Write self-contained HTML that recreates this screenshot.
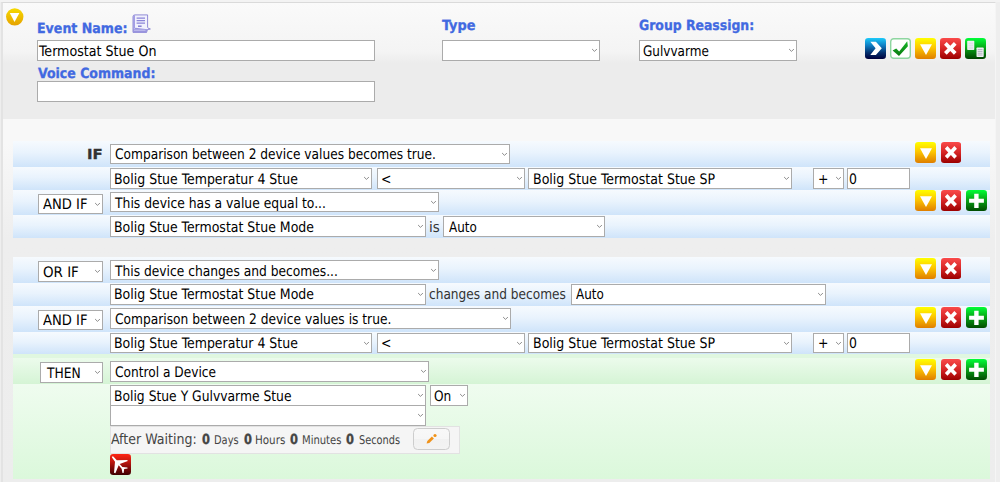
<!DOCTYPE html>
<html><head><meta charset="utf-8"><title>Event</title>
<style>
html,body{margin:0;padding:0}
body{width:1000px;height:482px;overflow:hidden;background:#eeeeee;position:relative;font-family:"DejaVu Sans Condensed","DejaVu Sans","Liberation Sans",sans-serif;font-size:14.5px;color:#000;text-rendering:geometricPrecision}
div{position:absolute;box-sizing:border-box}
.frame{border:1px solid #dadada;border-left:2px solid #e3e3e3;border-right-color:#f5f5f5;background:linear-gradient(#f8f8f8 0,#f8f8f8 140px,#eeeeee 236px,#ededed 100%)}
.tops{background:#f3f3f3}
.hdr{background:linear-gradient(#fafafa 0%,#f4f4f4 42%,#ececec 52%,#ececec 100%)}
.rowb{background:linear-gradient(#f6fafe 0%,#e9f3fd 45%,#cfe4fa 100%)}
.rowg{background:linear-gradient(#ecfbec,#d5f4d5)}
.gbody{background:linear-gradient(#e0f7e0 0,#e0f7e0 4px,#effcef 30px,#dbf8db 100%)}
.sel,.inp{border:1px solid #ababab;background:#fff;white-space:nowrap;overflow:hidden}
span,.t{position:absolute;white-space:nowrap;line-height:20px;font-size:14.5px;transform-origin:0 50%;transform:scaleX(.955)}
.cv{position:absolute;right:1px;top:50%;margin-top:-2.5px}
.lbl{color:#4169e1;font-weight:bold;font-size:14px;-webkit-text-stroke:0.3px #4169e1}
.ic{width:21px;height:21px}
.ic svg{display:block}
.b{font-weight:bold;font-size:13.8px;-webkit-text-stroke:0.3px currentColor}
.sm{font-size:12px}
.dk{color:#333}.dk2{color:#444}
.wait{background:#f5f5f5;border:1px solid #e2e2e2}
.btn{border:1px solid #cdcdcd;border-radius:4.5px;background:linear-gradient(#f8f8f8 0%,#f6f6f6 50%,#f1f1f1 52%,#f3f3f3 100%)}
</style></head><body>
<div class="tops" style="left:0px;top:0px;width:1000px;height:2px"></div>
<div class="frame" style="left:1px;top:2px;width:995px;height:488px"></div>
<div class="hdr" style="left:3px;top:3px;width:992px;height:116px"></div>
<div class="ic" style="left:6px;top:7.5px;width:18px;height:18px"><svg width="18" height="18" viewBox="0 0 18 18"><defs><linearGradient id="g1" x1="0" y1="0" x2="0" y2="1"><stop offset="0" stop-color="#f6da00"/><stop offset="1" stop-color="#e6a200"/></linearGradient></defs><circle cx="8.75" cy="8.85" r="8.7" fill="url(#g1)"/><path d="M3.8 5 L13.4 5 L8.5 14.1 Z" fill="#fff"/></svg></div>
<div class="t lbl" style="left:37.03px;top:19px;transform:scaleX(1.000)">Event Name:</div>
<div class="ic" style="left:131.7px;top:14.1px;width:20px;height:20px"><svg width="20" height="20" viewBox="0 0 20 20"><path d="M3 0.9 H15.6 V13.2 Q15.9 14.7 18.4 15 L15.4 15.6 L14.6 18.4 H1 V2.6 Q1 0.9 3 0.9Z" fill="#f1f1fd" stroke="#7770cd" stroke-width="0.8" stroke-linejoin="round"/><path d="M1 2.6 Q1 0.9 3 0.9 V13.6 Q2.8 15.2 1 15.4 Z" fill="#a39eE4"/><path d="M1 15.2 Q3 15 3.4 13.8 L15.4 15.3 L14.6 18.4 H1Z" fill="#9994de"/><path d="M2 16.2 H13.5" stroke="#d8d6f6" stroke-width="0.8"/><path d="M4.6 4.2 H13 M4.6 6.7 H13 M4.6 9.2 H13" stroke="#8a84d8" stroke-width="1.3"/><path d="M6 12.2 H9.6" stroke="#7a74d0" stroke-width="1.4"/></svg></div>
<div class="inp" style="left:37px;top:40px;width:338px;height:21px"><span style="left:1.43px;top:1px;transform:scaleX(0.972)">Termostat Stue On</span></div>
<div class="t lbl" style="left:38.18px;top:64px;transform:scaleX(0.995)">Voice Command:</div>
<div class="inp" style="left:37px;top:81px;width:338px;height:21px"></div>
<div class="t lbl" style="left:442.08px;top:16px;transform:scaleX(1.023)">Type</div>
<div class="sel" style="left:442px;top:40px;width:158px;height:21px"><svg class="cv" width="7" height="5" viewBox="0 0 7 5"><path d="M1.1 1 L3.5 3.4 L5.9 1" fill="none" stroke="#777" stroke-width="0.85"/></svg></div>
<div class="t lbl" style="left:639.15px;top:16px;transform:scaleX(0.987)">Group Reassign:</div>
<div class="sel" style="left:639px;top:40px;width:158px;height:21px"><span style="left:3.05px;top:1px;transform:scaleX(0.923)">Gulvvarme</span><svg class="cv" width="7" height="5" viewBox="0 0 7 5"><path d="M1.1 1 L3.5 3.4 L5.9 1" fill="none" stroke="#777" stroke-width="0.85"/></svg></div>
<div class="ic" style="left:865px;top:38px"><svg width="21" height="21" viewBox="0 0 21 21"><defs><linearGradient id="g3" x1="0" y1="0" x2="0" y2="1"><stop offset="0" stop-color="#1ccafa"/><stop offset="0.35" stop-color="#0f7fc4"/><stop offset="0.7" stop-color="#05306e"/><stop offset="1" stop-color="#00003c"/></linearGradient></defs><rect width="21" height="21" rx="3.2" fill="url(#g3)"/><path d="M5.3 3.7 L10.9 3.7 L16.8 10.3 L10.9 17 L5.3 17 L10.6 10.3 Z" fill="#fff"/></svg></div>
<div class="ic" style="left:890px;top:38px"><svg width="21" height="21" viewBox="0 0 21 21"><defs><linearGradient id="g4" x1="0" y1="0" x2="0" y2="1"><stop offset="0" stop-color="#18b828"/><stop offset="1" stop-color="#087a10"/></linearGradient></defs><rect x="0.7" y="0.7" width="19.6" height="19.6" rx="3" fill="#fff" stroke="#8ed6a0" stroke-width="1.4"/><path d="M2.6 12.6 L6.2 10.5 L9.2 13.6 L17.2 3.3 L17.9 8.2 L9 18 Z" fill="url(#g4)"/></svg></div>
<div class="ic" style="left:915px;top:38px"><svg width="21" height="21" viewBox="0 0 21 21"><defs><linearGradient id="g5" x1="0" y1="0" x2="0" y2="1"><stop offset="0" stop-color="#ffff00"/><stop offset="0.45" stop-color="#fdc800"/><stop offset="1" stop-color="#df7e00"/></linearGradient></defs><rect width="21" height="21" rx="3.2" fill="url(#g5)"/><path d="M5 6.2 L17 6.2 L11 16.9 Z" fill="#fff"/></svg></div>
<div class="ic" style="left:940px;top:38px"><svg width="21" height="21" viewBox="0 0 21 21"><defs><linearGradient id="g6" x1="0" y1="0" x2="0" y2="1"><stop offset="0" stop-color="#fa4a4a"/><stop offset="0.5" stop-color="#d62626"/><stop offset="1" stop-color="#9c0000"/></linearGradient></defs><rect width="21" height="21" rx="3.2" fill="url(#g6)"/><path d="M10.3 7.7 L13.9 4.1 L16.6 6.8 L13 10.4 L16.6 14 L13.9 16.7 L10.3 13.1 L6.7 16.7 L4 14 L7.6 10.4 L4 6.8 L6.7 4.1 Z" fill="#fff"/></svg></div>
<div class="ic" style="left:965.3px;top:38px"><svg width="21" height="21" viewBox="0 0 21 21"><defs><linearGradient id="g7" x1="0" y1="0" x2="0" y2="1"><stop offset="0" stop-color="#00ff38"/><stop offset="0.45" stop-color="#08a818"/><stop offset="1" stop-color="#004200"/></linearGradient></defs><rect width="21" height="21" rx="3.2" fill="url(#g7)"/><rect x="2.2" y="2.8" width="7.1" height="9.2" rx="0.7" fill="#eef0f3"/><path d="M3.4 5.2h4.7M3.4 7.2h4.7M3.4 9.2h4.7M3.4 10.8h4.7" stroke="#d4d8de" stroke-width="0.8"/><rect x="11.5" y="9.6" width="7.2" height="9.4" rx="0.7" fill="#f0f1f5"/><path d="M12.7 11.6h4.8M12.7 13.4h4.8M12.7 15.2h4.8M12.7 17h4.8" stroke="#a8acb8" stroke-width="0.9"/></svg></div>
<div class="rowb" style="left:13px;top:141px;width:977px;height:26px"></div>
<div class="rowb" style="left:13px;top:167px;width:977px;height:23px"></div>
<div class="rowb" style="left:13px;top:190px;width:977px;height:25px"></div>
<div class="rowb" style="left:13px;top:215px;width:977px;height:23px"></div>
<div class="t b dk" style="left:87.15px;top:145px;transform:scaleX(1.200)">IF</div>
<div class="sel" style="left:110px;top:144px;width:400px;height:20px"><span style="left:3.6px;top:0px;transform:scaleX(0.936)">Comparison between 2 device values becomes true.</span><svg class="cv" width="7" height="5" viewBox="0 0 7 5"><path d="M1.1 1 L3.5 3.4 L5.9 1" fill="none" stroke="#777" stroke-width="0.85"/></svg></div>
<div class="ic" style="left:915px;top:142px"><svg width="21" height="21" viewBox="0 0 21 21"><defs><linearGradient id="g8" x1="0" y1="0" x2="0" y2="1"><stop offset="0" stop-color="#ffff00"/><stop offset="0.45" stop-color="#fdc800"/><stop offset="1" stop-color="#df7e00"/></linearGradient></defs><rect width="21" height="21" rx="3.2" fill="url(#g8)"/><path d="M5 6.2 L17 6.2 L11 16.9 Z" fill="#fff"/></svg></div>
<div class="ic" style="left:940.8px;top:142px"><svg preserveAspectRatio="none" width="20.2" height="21" viewBox="0 0 21 21"><defs><linearGradient id="g9" x1="0" y1="0" x2="0" y2="1"><stop offset="0" stop-color="#fa4a4a"/><stop offset="0.5" stop-color="#d62626"/><stop offset="1" stop-color="#9c0000"/></linearGradient></defs><rect width="21" height="21" rx="3.2" fill="url(#g9)"/><path d="M10.3 7.7 L13.9 4.1 L16.6 6.8 L13 10.4 L16.6 14 L13.9 16.7 L10.3 13.1 L6.7 16.7 L4 14 L7.6 10.4 L4 6.8 L6.7 4.1 Z" fill="#fff"/></svg></div>
<div class="sel" style="left:110px;top:168px;width:262px;height:21px"><span style="left:3.08px;top:1px;transform:scaleX(0.961)">Bolig Stue Temperatur 4 Stue</span><svg class="cv" width="7" height="5" viewBox="0 0 7 5"><path d="M1.1 1 L3.5 3.4 L5.9 1" fill="none" stroke="#777" stroke-width="0.85"/></svg></div>
<div class="sel" style="left:377px;top:168px;width:148px;height:21px"><span style="left:3.17px;top:1px">&lt;</span><svg class="cv" width="7" height="5" viewBox="0 0 7 5"><path d="M1.1 1 L3.5 3.4 L5.9 1" fill="none" stroke="#777" stroke-width="0.85"/></svg></div>
<div class="sel" style="left:528px;top:168px;width:264px;height:21px"><span style="left:3.53px;top:1px;transform:scaleX(0.964)">Bolig Stue Termostat Stue SP</span><svg class="cv" width="7" height="5" viewBox="0 0 7 5"><path d="M1.1 1 L3.5 3.4 L5.9 1" fill="none" stroke="#777" stroke-width="0.85"/></svg></div>
<div class="sel" style="left:813px;top:168px;width:31px;height:21px"><span style="left:3.97px;top:1px">+</span><svg class="cv" width="7" height="5" viewBox="0 0 7 5"><path d="M1.1 1 L3.5 3.4 L5.9 1" fill="none" stroke="#777" stroke-width="0.85"/></svg></div>
<div class="inp" style="left:847px;top:168px;width:63px;height:21px"><span style="left:0.68px;top:1px">0</span></div>
<div class="sel" style="left:38px;top:194px;width:65px;height:20px"><span style="left:4.4px;top:0px;transform:scaleX(1.006)">AND IF</span><svg class="cv" width="7" height="5" viewBox="0 0 7 5"><path d="M1.1 1 L3.5 3.4 L5.9 1" fill="none" stroke="#777" stroke-width="0.85"/></svg></div>
<div class="sel" style="left:110px;top:192px;width:329px;height:20px"><span style="left:4.33px;top:1px;transform:scaleX(0.948)">This device has a value equal to...</span><svg class="cv" width="7" height="5" viewBox="0 0 7 5"><path d="M1.1 1 L3.5 3.4 L5.9 1" fill="none" stroke="#777" stroke-width="0.85"/></svg></div>
<div class="ic" style="left:915px;top:190.3px"><svg width="21" height="21" viewBox="0 0 21 21"><defs><linearGradient id="g10" x1="0" y1="0" x2="0" y2="1"><stop offset="0" stop-color="#ffff00"/><stop offset="0.45" stop-color="#fdc800"/><stop offset="1" stop-color="#df7e00"/></linearGradient></defs><rect width="21" height="21" rx="3.2" fill="url(#g10)"/><path d="M5 6.2 L17 6.2 L11 16.9 Z" fill="#fff"/></svg></div>
<div class="ic" style="left:940.8px;top:190.3px"><svg preserveAspectRatio="none" width="20.2" height="21" viewBox="0 0 21 21"><defs><linearGradient id="g11" x1="0" y1="0" x2="0" y2="1"><stop offset="0" stop-color="#fa4a4a"/><stop offset="0.5" stop-color="#d62626"/><stop offset="1" stop-color="#9c0000"/></linearGradient></defs><rect width="21" height="21" rx="3.2" fill="url(#g11)"/><path d="M10.3 7.7 L13.9 4.1 L16.6 6.8 L13 10.4 L16.6 14 L13.9 16.7 L10.3 13.1 L6.7 16.7 L4 14 L7.6 10.4 L4 6.8 L6.7 4.1 Z" fill="#fff"/></svg></div>
<div class="ic" style="left:965.7px;top:190.3px"><svg width="21" height="21" viewBox="0 0 21 21"><defs><linearGradient id="g12" x1="0" y1="0" x2="0" y2="1"><stop offset="0" stop-color="#00ff38"/><stop offset="0.45" stop-color="#08a818"/><stop offset="1" stop-color="#004c00"/></linearGradient></defs><rect width="21" height="21" rx="3.2" fill="url(#g12)"/><path d="M8.2 3.7 H12.6 V8.8 H17.9 V12.8 H12.6 V18 H8.2 V12.8 H3.1 V8.8 H8.2 Z" fill="#fff"/></svg></div>
<div class="sel" style="left:110px;top:216px;width:316px;height:21px"><span style="left:3.08px;top:1px;transform:scaleX(0.960)">Bolig Stue Termostat Stue Mode</span><svg class="cv" width="7" height="5" viewBox="0 0 7 5"><path d="M1.1 1 L3.5 3.4 L5.9 1" fill="none" stroke="#777" stroke-width="0.85"/></svg></div>
<div class="t dk" style="left:428.82px;top:218px;transform:scaleX(1.028)">is</div>
<div class="sel" style="left:443px;top:216px;width:162px;height:21px"><span style="left:4.65px;top:1px;transform:scaleX(0.917)">Auto</span><svg class="cv" width="7" height="5" viewBox="0 0 7 5"><path d="M1.1 1 L3.5 3.4 L5.9 1" fill="none" stroke="#777" stroke-width="0.85"/></svg></div>
<div class="rowb" style="left:13px;top:257px;width:977px;height:26px"></div>
<div class="rowb" style="left:13px;top:283px;width:977px;height:23px"></div>
<div class="rowb" style="left:13px;top:306px;width:977px;height:26px"></div>
<div class="rowb" style="left:13px;top:332px;width:977px;height:22px"></div>
<div class="sel" style="left:38px;top:261px;width:65px;height:21px"><span style="left:3.8px;top:1px;transform:scaleX(1.029)">OR IF</span><svg class="cv" width="7" height="5" viewBox="0 0 7 5"><path d="M1.1 1 L3.5 3.4 L5.9 1" fill="none" stroke="#777" stroke-width="0.85"/></svg></div>
<div class="sel" style="left:110px;top:260px;width:329px;height:20px"><span style="left:4.33px;top:1px;transform:scaleX(0.941)">This device changes and becomes...</span><svg class="cv" width="7" height="5" viewBox="0 0 7 5"><path d="M1.1 1 L3.5 3.4 L5.9 1" fill="none" stroke="#777" stroke-width="0.85"/></svg></div>
<div class="ic" style="left:915px;top:258px"><svg width="21" height="21" viewBox="0 0 21 21"><defs><linearGradient id="g13" x1="0" y1="0" x2="0" y2="1"><stop offset="0" stop-color="#ffff00"/><stop offset="0.45" stop-color="#fdc800"/><stop offset="1" stop-color="#df7e00"/></linearGradient></defs><rect width="21" height="21" rx="3.2" fill="url(#g13)"/><path d="M5 6.2 L17 6.2 L11 16.9 Z" fill="#fff"/></svg></div>
<div class="ic" style="left:940.8px;top:258px"><svg preserveAspectRatio="none" width="20.2" height="21" viewBox="0 0 21 21"><defs><linearGradient id="g14" x1="0" y1="0" x2="0" y2="1"><stop offset="0" stop-color="#fa4a4a"/><stop offset="0.5" stop-color="#d62626"/><stop offset="1" stop-color="#9c0000"/></linearGradient></defs><rect width="21" height="21" rx="3.2" fill="url(#g14)"/><path d="M10.3 7.7 L13.9 4.1 L16.6 6.8 L13 10.4 L16.6 14 L13.9 16.7 L10.3 13.1 L6.7 16.7 L4 14 L7.6 10.4 L4 6.8 L6.7 4.1 Z" fill="#fff"/></svg></div>
<div class="sel" style="left:110px;top:284px;width:316px;height:21px"><span style="left:3.08px;top:0px;transform:scaleX(0.960)">Bolig Stue Termostat Stue Mode</span><svg class="cv" width="7" height="5" viewBox="0 0 7 5"><path d="M1.1 1 L3.5 3.4 L5.9 1" fill="none" stroke="#777" stroke-width="0.85"/></svg></div>
<div class="t dk" style="left:429.31px;top:285px;transform:scaleX(0.933)">changes and becomes</div>
<div class="sel" style="left:571px;top:284px;width:255px;height:21px"><span style="left:4.15px;top:0px;transform:scaleX(0.917)">Auto</span><svg class="cv" width="7" height="5" viewBox="0 0 7 5"><path d="M1.1 1 L3.5 3.4 L5.9 1" fill="none" stroke="#777" stroke-width="0.85"/></svg></div>
<div class="sel" style="left:38px;top:310px;width:65px;height:20px"><span style="left:4.4px;top:0px;transform:scaleX(1.006)">AND IF</span><svg class="cv" width="7" height="5" viewBox="0 0 7 5"><path d="M1.1 1 L3.5 3.4 L5.9 1" fill="none" stroke="#777" stroke-width="0.85"/></svg></div>
<div class="sel" style="left:110px;top:308px;width:401px;height:21px"><span style="left:3.6px;top:1px;transform:scaleX(0.939)">Comparison between 2 device values is true.</span><svg class="cv" width="7" height="5" viewBox="0 0 7 5"><path d="M1.1 1 L3.5 3.4 L5.9 1" fill="none" stroke="#777" stroke-width="0.85"/></svg></div>
<div class="ic" style="left:915px;top:306.75px"><svg width="21" height="21" viewBox="0 0 21 21"><defs><linearGradient id="g15" x1="0" y1="0" x2="0" y2="1"><stop offset="0" stop-color="#ffff00"/><stop offset="0.45" stop-color="#fdc800"/><stop offset="1" stop-color="#df7e00"/></linearGradient></defs><rect width="21" height="21" rx="3.2" fill="url(#g15)"/><path d="M5 6.2 L17 6.2 L11 16.9 Z" fill="#fff"/></svg></div>
<div class="ic" style="left:940.8px;top:306.75px"><svg preserveAspectRatio="none" width="20.2" height="21" viewBox="0 0 21 21"><defs><linearGradient id="g16" x1="0" y1="0" x2="0" y2="1"><stop offset="0" stop-color="#fa4a4a"/><stop offset="0.5" stop-color="#d62626"/><stop offset="1" stop-color="#9c0000"/></linearGradient></defs><rect width="21" height="21" rx="3.2" fill="url(#g16)"/><path d="M10.3 7.7 L13.9 4.1 L16.6 6.8 L13 10.4 L16.6 14 L13.9 16.7 L10.3 13.1 L6.7 16.7 L4 14 L7.6 10.4 L4 6.8 L6.7 4.1 Z" fill="#fff"/></svg></div>
<div class="ic" style="left:965.6px;top:306.75px"><svg width="21" height="21" viewBox="0 0 21 21"><defs><linearGradient id="g17" x1="0" y1="0" x2="0" y2="1"><stop offset="0" stop-color="#00ff38"/><stop offset="0.45" stop-color="#08a818"/><stop offset="1" stop-color="#004c00"/></linearGradient></defs><rect width="21" height="21" rx="3.2" fill="url(#g17)"/><path d="M8.2 3.7 H12.6 V8.8 H17.9 V12.8 H12.6 V18 H8.2 V12.8 H3.1 V8.8 H8.2 Z" fill="#fff"/></svg></div>
<div class="sel" style="left:110px;top:333px;width:262px;height:20px"><span style="left:3.08px;top:0px;transform:scaleX(0.961)">Bolig Stue Temperatur 4 Stue</span><svg class="cv" width="7" height="5" viewBox="0 0 7 5"><path d="M1.1 1 L3.5 3.4 L5.9 1" fill="none" stroke="#777" stroke-width="0.85"/></svg></div>
<div class="sel" style="left:377px;top:333px;width:148px;height:20px"><span style="left:3.17px;top:0px">&lt;</span><svg class="cv" width="7" height="5" viewBox="0 0 7 5"><path d="M1.1 1 L3.5 3.4 L5.9 1" fill="none" stroke="#777" stroke-width="0.85"/></svg></div>
<div class="sel" style="left:528px;top:333px;width:264px;height:20px"><span style="left:3.53px;top:0px;transform:scaleX(0.964)">Bolig Stue Termostat Stue SP</span><svg class="cv" width="7" height="5" viewBox="0 0 7 5"><path d="M1.1 1 L3.5 3.4 L5.9 1" fill="none" stroke="#777" stroke-width="0.85"/></svg></div>
<div class="sel" style="left:813px;top:333px;width:31px;height:20px"><span style="left:3.97px;top:0px">+</span><svg class="cv" width="7" height="5" viewBox="0 0 7 5"><path d="M1.1 1 L3.5 3.4 L5.9 1" fill="none" stroke="#777" stroke-width="0.85"/></svg></div>
<div class="inp" style="left:847px;top:333px;width:63px;height:20px"><span style="left:0.68px;top:0px">0</span></div>
<div class="gbody" style="left:13px;top:354px;width:977px;height:125px"></div>
<div class="rowg" style="left:13px;top:358px;width:977px;height:26px"></div>
<div class="sel" style="left:40px;top:362px;width:63px;height:21px"><span style="left:5.53px;top:1px;transform:scaleX(0.943)">THEN</span><svg class="cv" width="7" height="5" viewBox="0 0 7 5"><path d="M1.1 1 L3.5 3.4 L5.9 1" fill="none" stroke="#777" stroke-width="0.85"/></svg></div>
<div class="sel" style="left:110px;top:361px;width:319px;height:21px"><span style="left:3.6px;top:1px;transform:scaleX(0.935)">Control a Device</span><svg class="cv" width="7" height="5" viewBox="0 0 7 5"><path d="M1.1 1 L3.5 3.4 L5.9 1" fill="none" stroke="#777" stroke-width="0.85"/></svg></div>
<div class="ic" style="left:915px;top:359.2px"><svg width="21" height="21" viewBox="0 0 21 21"><defs><linearGradient id="g18" x1="0" y1="0" x2="0" y2="1"><stop offset="0" stop-color="#ffff00"/><stop offset="0.45" stop-color="#fdc800"/><stop offset="1" stop-color="#df7e00"/></linearGradient></defs><rect width="21" height="21" rx="3.2" fill="url(#g18)"/><path d="M5 6.2 L17 6.2 L11 16.9 Z" fill="#fff"/></svg></div>
<div class="ic" style="left:940.8px;top:359.2px"><svg preserveAspectRatio="none" width="20.2" height="21" viewBox="0 0 21 21"><defs><linearGradient id="g19" x1="0" y1="0" x2="0" y2="1"><stop offset="0" stop-color="#fa4a4a"/><stop offset="0.5" stop-color="#d62626"/><stop offset="1" stop-color="#9c0000"/></linearGradient></defs><rect width="21" height="21" rx="3.2" fill="url(#g19)"/><path d="M10.3 7.7 L13.9 4.1 L16.6 6.8 L13 10.4 L16.6 14 L13.9 16.7 L10.3 13.1 L6.7 16.7 L4 14 L7.6 10.4 L4 6.8 L6.7 4.1 Z" fill="#fff"/></svg></div>
<div class="ic" style="left:965.7px;top:359.2px"><svg width="21" height="21" viewBox="0 0 21 21"><defs><linearGradient id="g20" x1="0" y1="0" x2="0" y2="1"><stop offset="0" stop-color="#00ff38"/><stop offset="0.45" stop-color="#08a818"/><stop offset="1" stop-color="#004c00"/></linearGradient></defs><rect width="21" height="21" rx="3.2" fill="url(#g20)"/><path d="M8.2 3.7 H12.6 V8.8 H17.9 V12.8 H12.6 V18 H8.2 V12.8 H3.1 V8.8 H8.2 Z" fill="#fff"/></svg></div>
<div class="sel" style="left:110px;top:385px;width:316px;height:21px"><span style="left:3.08px;top:1px;transform:scaleX(0.946)">Bolig Stue Y Gulvvarme Stue</span><svg class="cv" width="7" height="5" viewBox="0 0 7 5"><path d="M1.1 1 L3.5 3.4 L5.9 1" fill="none" stroke="#777" stroke-width="0.85"/></svg></div>
<div class="sel" style="left:430px;top:385px;width:38px;height:21px"><span style="left:3.05px;top:1px;transform:scaleX(0.931)">On</span><svg class="cv" width="7" height="5" viewBox="0 0 7 5"><path d="M1.1 1 L3.5 3.4 L5.9 1" fill="none" stroke="#777" stroke-width="0.85"/></svg></div>
<div class="sel" style="left:110px;top:405px;width:316px;height:21px"><svg class="cv" width="7" height="5" viewBox="0 0 7 5"><path d="M1.1 1 L3.5 3.4 L5.9 1" fill="none" stroke="#777" stroke-width="0.85"/></svg></div>
<div class="wait" style="left:110px;top:426px;width:350px;height:28px"></div>
<div class="t dk2" style="left:111.4px;top:430px;transform:scaleX(0.966)">After Waiting:</div>
<div class="t b dk2" style="left:201.57px;top:430px;transform:scaleX(0.922)">0</div>
<div class="t b dk2" style="left:243.57px;top:430px;transform:scaleX(0.922)">0</div>
<div class="t b dk2" style="left:289.82px;top:430px;transform:scaleX(0.922)">0</div>
<div class="t b dk2" style="left:346.07px;top:430px;transform:scaleX(0.922)">0</div>
<div class="t sm dk2" style="left:213.99px;top:430px;transform:scaleX(0.913)">Days</div>
<div class="t sm dk2" style="left:255.24px;top:430px;transform:scaleX(0.958)">Hours</div>
<div class="t sm dk2" style="left:302.24px;top:430px;transform:scaleX(0.927)">Minutes</div>
<div class="t sm dk2" style="left:358.57px;top:430px;transform:scaleX(0.906)">Seconds</div>
<div class="btn" style="left:413px;top:428px;width:37px;height:22px"><svg width="12" height="12" viewBox="0 0 12 12" style="position:absolute;left:12.1px;top:4.1px"><path d="M0.6 10.6 L1.3 8.1 L5.9 3.5 L7.9 5.5 L3.3 10.1 Z" fill="#f0921a"/><circle cx="9" cy="2.5" r="1.6" fill="#f0921a"/></svg></div>
<div class="ic" style="left:110px;top:454.3px"><svg width="21" height="21" viewBox="0 0 21 21"><defs><linearGradient id="g22" x1="0" y1="0" x2="0" y2="1"><stop offset="0" stop-color="#ff2414"/><stop offset="0.35" stop-color="#c41810"/><stop offset="0.7" stop-color="#7a0808"/><stop offset="1" stop-color="#3c0000"/></linearGradient></defs><rect width="21" height="21" rx="3.2" fill="url(#g22)"/><path d="M1.9 2.4 L3.3 2.6 L6.8 6.3 L17.2 5.9 L17.8 7 L9.7 9.9 L12.4 12.9 L17.4 13.5 L17.6 14.6 L14.2 15.1 L13.6 19 L12.5 19 L11.6 14.8 L8.7 11.2 L5.4 19.3 L4 18.7 L5 7.8 L2 3.5 Z" fill="#fff"/></svg></div>
</body></html>
